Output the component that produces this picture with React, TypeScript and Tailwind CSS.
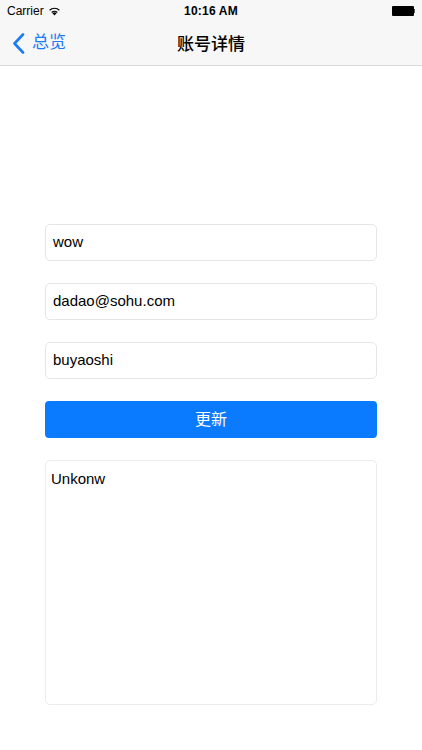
import React from "react"

const font = { fontFamily: '"Liberation Sans", "Noto Sans CJK SC", sans-serif' }

function Wifi() {
  return (
    <svg width="13" height="10" viewBox="0 0 13 10" className="ml-[4px]">
      <path d="M6.5 9.6 L4.4 7.3 A3 3 0 0 1 8.6 7.3 Z" fill="#000" />
      <path d="M3.3 6.1 A4.6 4.6 0 0 1 9.7 6.1 L8.9 7 A3.4 3.4 0 0 0 4.1 7 Z" fill="#000" />
      <path d="M1.2 3.8 A7.6 7.6 0 0 1 11.8 3.8 L11 4.7 A6.4 6.4 0 0 0 2 4.7 Z" fill="#000" />
    </svg>
  )
}

function Field({ value }: { value: string }) {
  return (
    <div className="h-[37px] rounded-[5px] border border-[#e6e6e6] bg-white px-[7px] flex items-center text-[15px] text-black">
      {value}
    </div>
  )
}

export default function App() {
  return (
    <div className="w-[422px] h-[750px] bg-white overflow-hidden" style={font}>
      <div className="bg-[#f7f7f7] border-b border-[#d9d9d9]">
        <div className="h-[21px] relative flex items-center px-[7px] text-[12px] text-black">
          <span>Carrier</span>
          <Wifi />
          <span className="absolute left-0 right-0 text-center font-semibold tracking-[0.2px]">10:16 AM</span>
          <div className="ml-auto flex items-center">
            <div className="w-[22px] h-[10px] bg-black rounded-[1px]" />
            <div className="w-[1.5px] h-[4px] bg-[#555]" />
          </div>
        </div>
        <div className="h-[44px] relative flex items-center">
          <div className="flex items-center pl-[12px] text-[#1a7cf5] text-[17px]">
            <svg width="13" height="21" viewBox="0 0 13 21">
              <path d="M11 1.5 L2.5 10.5 L11 19.5" fill="none" stroke="#1a7cf5" strokeWidth="2.6" strokeLinecap="round" strokeLinejoin="round" />
            </svg>
            <span className="ml-[7px]">总览</span>
          </div>
          <span
            className="absolute left-0 right-0 text-center text-[17px] font-medium text-black pointer-events-none"
            style={{ fontFamily: '"Noto Sans CJK SC", sans-serif' }}
          >
            账号详情
          </span>
        </div>
      </div>

      <div className="px-[45px] pt-[158px] flex flex-col w-[422px]">
        <div className="w-[332px] flex flex-col gap-[22px]">
          <Field value="wow" />
          <Field value="dadao@sohu.com" />
          <Field value="buyaoshi" />
          <button className="h-[37px] rounded-[4px] bg-[#0a7aff] text-white text-[16px]">更新</button>
          <div className="h-[245px] rounded-[5px] border border-[#ececec] bg-white px-[5px] pt-[7px] text-[15px] text-black">
            Unkonw
          </div>
        </div>
      </div>
    </div>
  )
}
